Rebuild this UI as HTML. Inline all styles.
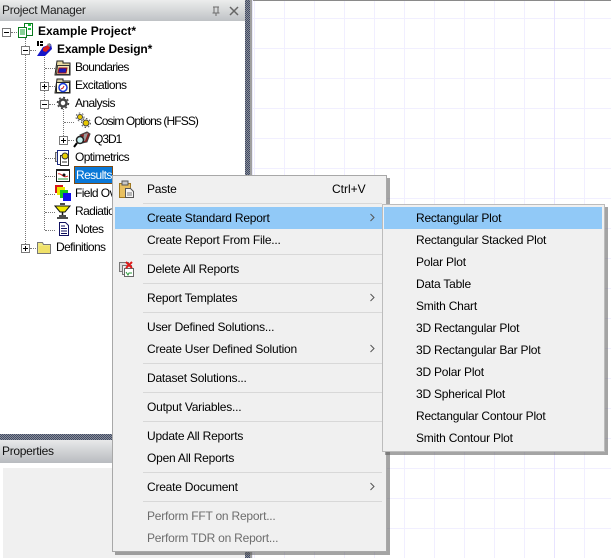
<!DOCTYPE html>
<html><head><meta charset="utf-8"><style>
html,body{margin:0;padding:0;background:#fff}
#r{position:relative;width:611px;height:558px;overflow:hidden;background:#fff;font-family:"Liberation Sans",sans-serif;font-size:12px;color:#000}
.t{position:absolute;white-space:nowrap;line-height:18px;height:18px;letter-spacing:-.22px}
.n{letter-spacing:-.6px}
.b{font-weight:bold;letter-spacing:0}
.a{position:absolute}
.s{position:absolute;left:143px;width:239px;height:1px;background:#d8d8d8}
.d{color:#6d6d6d}
.box{position:absolute;width:9px;height:9px;box-sizing:border-box;border:1px solid #7a7a7a;background:#fff}
.box:before{content:"";position:absolute;left:1px;top:3px;width:5px;height:1px;background:#000}
.box.p:after{content:"";position:absolute;left:3px;top:1px;width:1px;height:5px;background:#000}
.v{position:absolute;width:1px;border-left:1px dotted #777}
.h{position:absolute;height:1px;border-top:1px dotted #777}
</style></head><body><div id="r">
<svg class="a" style="left:250px;top:0" width="361" height="558">
<g stroke="#f1efff" stroke-width="1">
<path d="M4.5 0V558M34.5 0V558M64.5 0V558M94.5 0V558M124.5 0V558M154.5 0V558M184.5 0V558M214.5 0V558M244.5 0V558M274.5 0V558M334.5 0V558M0 18.5H361M0 48.5H361M0 78.5H361M0 108.5H361M0 138.5H361M0 168.5H361M0 198.5H361M0 228.500H361M0 258.500H361M0 288.500H361M0 318.500H361M0 348.500H361M0 378.500H361M0 408.500H361M0 438.500H361M0 468.5H361M0 498.5H361M0 528.5H361"/>
<path stroke="#e8e4ff" d="M304.5 0V558"/>
</g></svg>
<div class="a" style="left:250px;top:0;width:361px;height:1px;background:#8a8a8a"></div>
<div class="a" style="left:250px;top:0;width:2px;height:558px;background:#a0a0a0"></div>
<div class="a" style="left:252px;top:0;width:1px;height:558px;background:#e8e8f8"></div>

<div class="a" style="left:0;top:0;width:245px;height:21px;background:linear-gradient(#eceded,#bfc2c5)"></div>
<div class="t" style="left:2px;top:1px;color:#222;letter-spacing:-.3px">Project Manager</div>
<svg class="a" style="left:208px;top:3px" width="34" height="14">
<path d="M5 4h6M6 4v6M10 4v6M4.500 10h7M8 10v3" stroke="#6c6c6c" fill="none"/>
<path d="M22 4l8 8M30 4l-8 8" stroke="#666" stroke-width="1.500" fill="none"/>
</svg>
<svg class="a" style="left:0;top:0" width="250" height="558"><defs><pattern id="h" width="2" height="2" patternUnits="userSpaceOnUse"><rect width="2" height="2" fill="#8d8f95"/><rect width="1" height="1" fill="#3e4a68"/><rect x="1" y="1" width="1" height="1" fill="#3e4a68"/></pattern></defs><rect x="245" width="5" height="558" fill="url(#h)"/><rect y="434" width="250" height="6" fill="url(#h)"/></svg>

<!-- tree lines -->
<div class="h" style="left:11px;top:32px;width:6px"></div>
<div class="v" style="left:25px;top:38px;height:206px"></div>
<div class="h" style="left:30px;top:50px;width:6px"></div>
<div class="v" style="left:44px;top:55px;height:175px"></div>
<div class="h" style="left:45px;top:68px;width:10px"></div>
<div class="h" style="left:49px;top:86px;width:6px"></div>
<div class="h" style="left:49px;top:104px;width:6px"></div>
<div class="v" style="left:63px;top:109px;height:27px"></div>
<div class="h" style="left:64px;top:122px;width:10px"></div>
<div class="h" style="left:68px;top:140px;width:6px"></div>
<div class="h" style="left:45px;top:158px;width:10px"></div>
<div class="h" style="left:45px;top:176px;width:10px"></div>
<div class="h" style="left:45px;top:194px;width:10px"></div>
<div class="h" style="left:45px;top:212px;width:10px"></div>
<div class="h" style="left:45px;top:230px;width:10px"></div>
<div class="h" style="left:30px;top:248px;width:6px"></div>

<div class="box" style="left:2px;top:28px"></div>
<div class="box" style="left:21px;top:46px"></div>
<div class="box p" style="left:40px;top:82px"></div>
<div class="box" style="left:40px;top:100px"></div>
<div class="box p" style="left:59px;top:136px"></div>
<div class="box p" style="left:21px;top:244px"></div>

<!-- icons -->
<svg class="a" style="left:0;top:0" width="250" height="260" fill="none">
<!-- project -->
<rect x="24.500" y="23.500" width="8" height="12" fill="#fff" stroke="#0a7a1e"/><rect x="18.500" y="27.500" width="8" height="10" fill="#fff" stroke="#0a7a1e"/>
<path d="M20 30h5M20 32h5M20 34h5" stroke="#12a02c"/><path d="M28 25h3M28 29h3" stroke="#1ac83a" stroke-width="2"/>
<!-- design -->
<path d="M37 41h2v5h-2zM40 41h3v2h-3zM40 44h3v2h-3z" fill="#000"/>
<path d="M37 56l6-9 8-3 1 5-7 7z" fill="#1616c8"/><path d="M43 48l5-3 2 3-4 4-3-1z" fill="#d82020"/><path d="M47 44l3-1 1 3-2 1z" fill="#888"/>
<!-- boundaries -->
<path d="M57 61h6v2h7v12H55z" fill="#e8d9a0" stroke="#222"/><path d="M57.500 65.500h12v9h-13z" fill="#f2e6b8" stroke="#333"/>
<path d="M59 68h8l-1 5h-8z" fill="#1a1ab8" stroke="#a01010"/>
<!-- excitations -->
<path d="M57 79h6v2h7v12H55z" fill="#d8d0a0" stroke="#222"/><rect x="56.500" y="82.500" width="13" height="10" fill="#fffbe0" stroke="#222"/>
<circle cx="63" cy="87.500" r="4" fill="#fff" stroke="#1a3ad8" stroke-width="1.500"/><path d="M61 89l2-1 1-2" stroke="#d02020"/>
<!-- gear -->
<circle cx="63" cy="103" r="3.500" stroke="#444" stroke-width="2.500"/><circle cx="63" cy="103" r="5.500" stroke="#444" stroke-width="1.500" stroke-dasharray="2 2.300"/>
<!-- cosim -->
<circle cx="80" cy="117" r="2.500" fill="#e8c800" stroke="#444"/><circle cx="86" cy="123" r="3" fill="#e8c800" stroke="#444"/><circle cx="80" cy="117" r="4" stroke="#555" stroke-dasharray="1.500 2"/><circle cx="86" cy="123" r="4.500" stroke="#555" stroke-dasharray="1.500 2"/>
<!-- q3d -->
<path d="M80 135l7-3 3 2-3 8-5 1z" fill="#8a2020" stroke="#444"/><path d="M84 134l4-1-3 8-2 0z" fill="#999"/>
<circle cx="80" cy="140" r="3.500" fill="#c8f0f0" stroke="#222" stroke-width="1.500"/><path d="M77 143l-3 4" stroke="#000" stroke-width="2"/>
<!-- optimetrics -->
<rect x="55.500" y="152.500" width="8" height="9" fill="#ddd" stroke="#666"/><rect x="57.500" y="150.500" width="11" height="14" fill="#fff" stroke="#1a2a80"/>
<rect x="60.500" y="155.500" width="8" height="10" fill="#fff" stroke="#333"/><circle cx="65" cy="156" r="3" fill="#e8d000" stroke="#333"/><path d="M62 162h5" stroke="#333"/>
<!-- results -->
<rect x="56.500" y="169.500" width="13" height="12" fill="#fff" stroke="#111"/><path d="M56 170h14" stroke="#222" stroke-width="2"/><path d="M58 174c3-2 5 5 10 2" stroke="#d01818"/><circle cx="64" cy="175" r="1.500" fill="#111"/><path d="M58 179h10" stroke="#2a9a3a"/>
<!-- field overlays -->
<rect x="55" y="185" width="8" height="8" fill="#d81818"/><rect x="57" y="187" width="8" height="8" fill="#e8e800"/><rect x="60" y="190" width="8" height="8" fill="#18c818"/><rect x="63" y="193" width="8" height="8" fill="#1010e8"/>
<!-- radiation -->
<path d="M55 206h15l-5 6h-5z" fill="#f0e800" stroke="#111"/><path d="M60 204h5M62.500 212v3M59 216h7M57 218h11" stroke="#111" stroke-width="1.500"/>
<!-- notes -->
<path d="M59.500 222.500h6l3 3v10h-9z" fill="#fff" stroke="#101060"/><path d="M61 226h4M61 228.500h6M61 231h6M61 233.500h6" stroke="#101060"/>
<!-- definitions folder -->
<path d="M37.500 242.500h5l1 2h7v9h-13z" fill="#f0e880" stroke="#777"/><rect x="39" y="246" width="11" height="7" fill="#f0de60" opacity=".7"/>
</svg>

<div class="t b" style="left:38px;top:22px">Example Project*</div>
<div class="t b" style="left:57px;top:40px;letter-spacing:-.15px">Example Design*</div>
<div class="t n" style="left:75px;top:58px;letter-spacing:-.7px">Boundaries</div>
<div class="t n" style="left:75px;top:76px">Excitations</div>
<div class="t n" style="left:75px;top:94px">Analysis</div>
<div class="t n" style="left:94px;top:112px;letter-spacing:-.9px">Cosim Options (HFSS)</div>
<div class="t n" style="left:94px;top:130px;letter-spacing:-1px">Q3D1</div>
<div class="t n" style="left:75px;top:148px">Optimetrics</div>
<svg class="a" style="left:74px;top:166px" width="39" height="18"><rect width="39" height="18" fill="#0a78d7"/><rect x=".5" y=".5" width="38" height="17" fill="none" stroke="#111"/><rect x=".5" y=".5" width="38" height="17" fill="none" stroke="#e88010" stroke-dasharray="1 1"/></svg>
<div class="t n" style="left:76px;top:166px;color:#fff">Results</div>
<div class="t n" style="left:75px;top:184px">Field Overlays</div>
<div class="t n" style="left:75px;top:202px">Radiation</div>
<div class="t n" style="left:75px;top:220px">Notes</div>
<div class="t n" style="left:56px;top:238px">Definitions</div>

<!-- properties -->
<div class="a" style="left:0;top:440px;width:245px;height:23px;background:linear-gradient(#e8e9ea,#b8bbbf)"></div>
<div class="a" style="left:0;top:463px;width:245px;height:95px;background:#f0f0f0"></div>
<div class="a" style="left:0;top:463px;width:245px;height:5px;background:#fff"></div>
<div class="a" style="left:0;top:463px;width:3px;height:95px;background:#fff"></div>
<div class="t" style="left:2px;top:442px;color:#111;letter-spacing:-.3px">Properties</div>

<!-- main menu -->
<div class="a" style="left:115px;top:178px;width:275px;height:377px;background:#5a5a5a;opacity:.55"></div>
<div class="a" style="left:112px;top:175px;width:273px;height:375px;background:#f0f0f0;border:1px solid #a8a8a8"></div>
<div class="a" style="left:115px;top:207px;width:267px;height:22px;background:#91c9f7"></div>
<div class="s" style="top:203px"></div><div class="s" style="top:254px"></div><div class="s" style="top:283px"></div><div class="s" style="top:312px"></div><div class="s" style="top:363px"></div><div class="s" style="top:392px"></div><div class="s" style="top:421px"></div><div class="s" style="top:472px"></div><div class="s" style="top:501px"></div>

<svg class="a" style="left:116px;top:178px" width="22" height="100" fill="none">
<rect x="3.500" y="5.500" width="11" height="14" fill="#e8c060" stroke="#a07820"/><rect x="6" y="3" width="6" height="4" fill="#c8c8c8" stroke="#555"/>
<path d="M9.500 10.500h5l3 3v6h-8z" fill="#f4f4f4" stroke="#555"/><path d="M11 15h5M11 17h5" stroke="#777"/>
<rect x="3.500" y="84.500" width="9" height="9" fill="#ddd" stroke="#777"/><rect x="6.500" y="87.500" width="9" height="9" fill="#eee" stroke="#777"/><rect x="8.500" y="90.500" width="9" height="8" fill="#fff" stroke="#666"/>
<path d="M10 84l6 6M16 84l-6 6" stroke="#e01818" stroke-width="2"/><path d="M10 94l2 3 1-2h3" stroke="#2a9a3a"/>
</svg>

<div class="t" style="left:147px;top:180px">Paste</div><div class="t" style="left:332px;top:180px;letter-spacing:0">Ctrl+V</div>
<div class="t" style="left:147px;top:209px">Create Standard Report</div>
<div class="t" style="left:147px;top:231px">Create Report From File...</div>
<div class="t" style="left:147px;top:260px">Delete All Reports</div>
<div class="t" style="left:147px;top:289px">Report Templates</div>
<div class="t" style="left:147px;top:318px">User Defined Solutions...</div>
<div class="t" style="left:147px;top:340px">Create User Defined Solution</div>
<div class="t" style="left:147px;top:369px">Dataset Solutions...</div>
<div class="t" style="left:147px;top:398px">Output Variables...</div>
<div class="t" style="left:147px;top:427px">Update All Reports</div>
<div class="t" style="left:147px;top:449px">Open All Reports</div>
<div class="t" style="left:147px;top:478px">Create Document</div>
<div class="t d" style="left:147px;top:507px">Perform FFT on Report...</div>
<div class="t d" style="left:147px;top:529px">Perform TDR on Report...</div>
<svg class="a" style="left:369px;top:210px" width="8" height="290" fill="none" stroke="#555"><path d="M1.500 4l3.500 3.500L1.500 11M1.500 84l3.500 3.500L1.500 91M1.500 135l3.500 3.500L1.500 142M1.500 273l3.500 3.500L1.500 280"/></svg>

<!-- submenu -->
<div class="a" style="left:385px;top:207px;width:223px;height:248px;background:#5a5a5a;opacity:.55"></div>
<div class="a" style="left:382px;top:204px;width:221px;height:246px;background:#f0f0f0;border:1px solid #bcbcbc"></div>
<div class="a" style="left:384px;top:207px;width:218px;height:22px;background:#91c9f7"></div>
<div class="t" style="left:416px;top:209px">Rectangular Plot</div>
<div class="t" style="left:416px;top:231px">Rectangular Stacked Plot</div>
<div class="t" style="left:416px;top:253px">Polar Plot</div>
<div class="t" style="left:416px;top:275px">Data Table</div>
<div class="t" style="left:416px;top:297px">Smith Chart</div>
<div class="t" style="left:416px;top:319px">3D Rectangular Plot</div>
<div class="t" style="left:416px;top:341px">3D Rectangular Bar Plot</div>
<div class="t" style="left:416px;top:363px">3D Polar Plot</div>
<div class="t" style="left:416px;top:385px">3D Spherical Plot</div>
<div class="t" style="left:416px;top:407px">Rectangular Contour Plot</div>
<div class="t" style="left:416px;top:429px">Smith Contour Plot</div>
</div></body></html>
